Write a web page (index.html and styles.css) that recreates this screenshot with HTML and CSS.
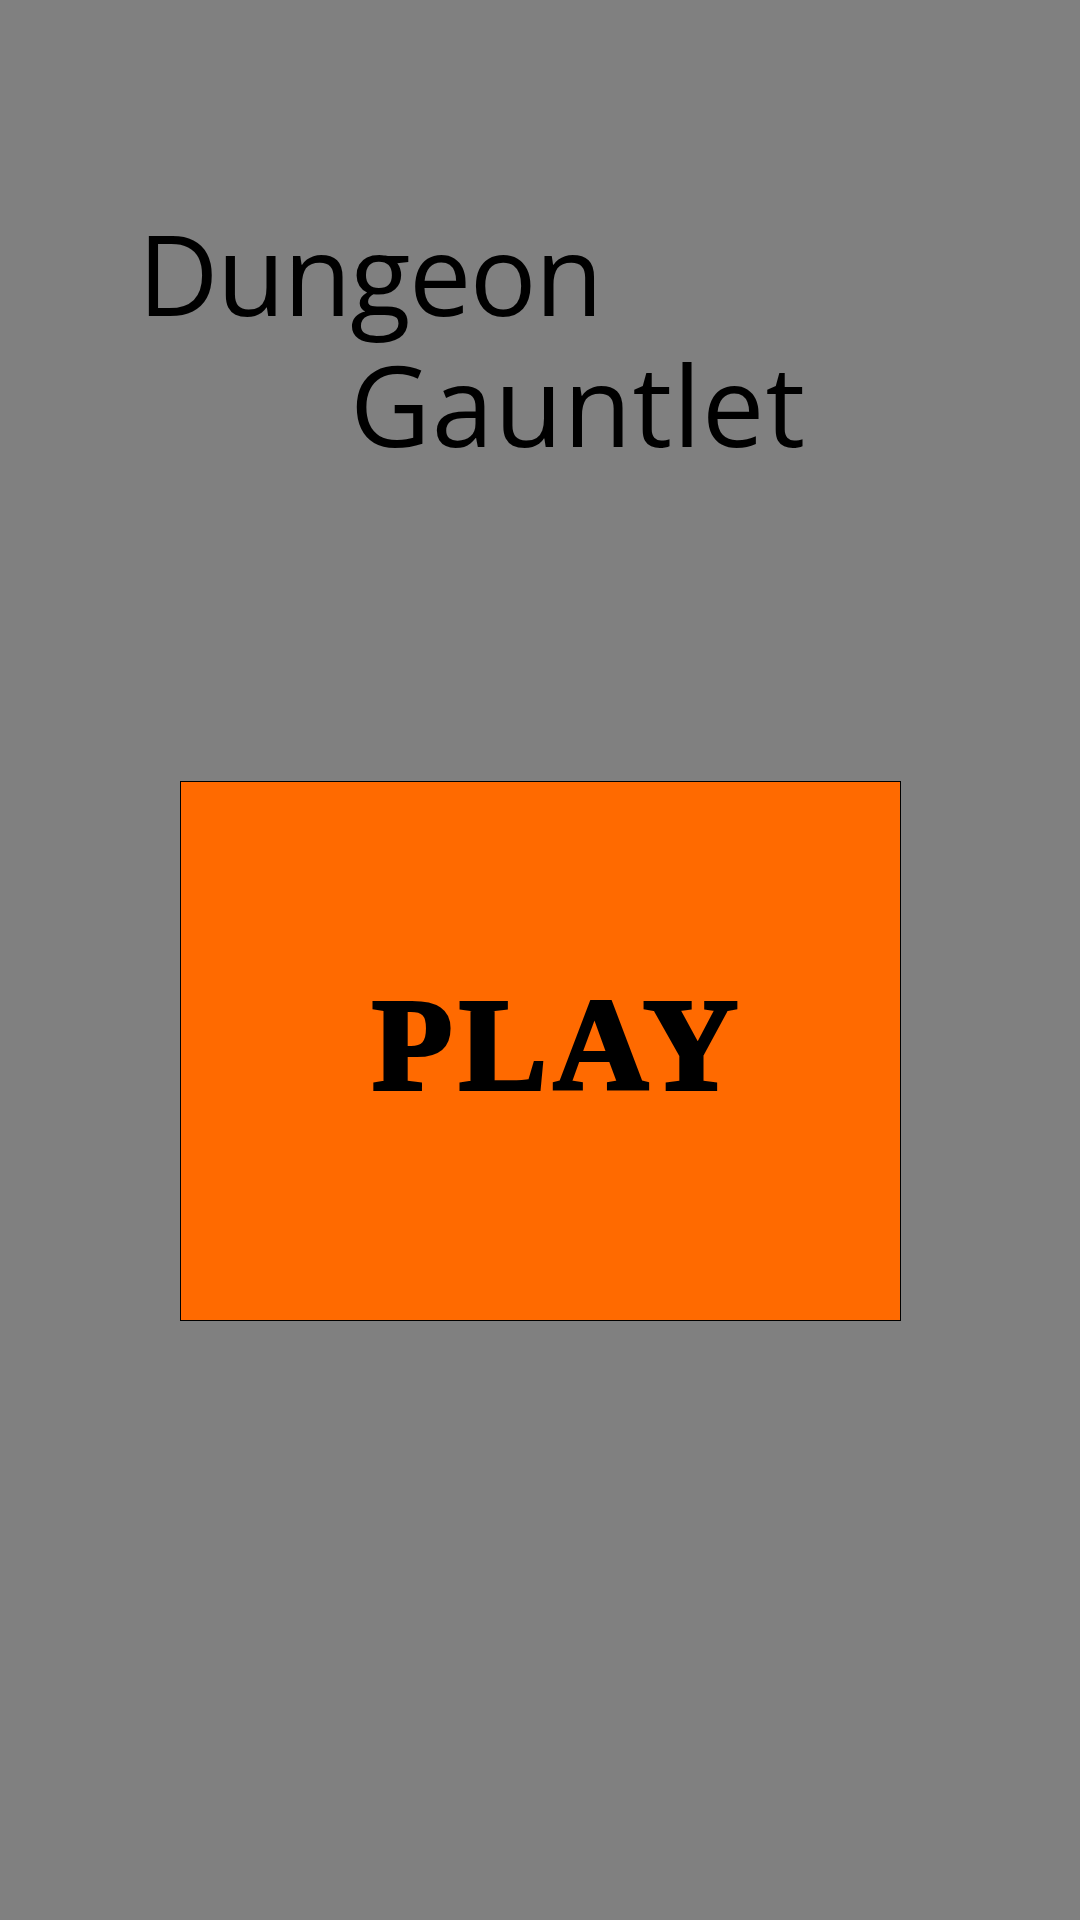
FILE: index.html
```html
<!DOCTYPE html>
<html>
<head>
<meta charset="utf-8">
<link rel="stylesheet" href="styles.css">
</head>
<body>
<div class="screen">
  <h1 class="title">
    <span class="line line-1">Dungeon</span>
    <span class="line line-2">Gauntlet</span>
  </h1>
  <button class="play">PLAY</button>
</div>
</body>
</html>
```
FILE: styles.css
```css
html, body {
  margin: 0;
  padding: 0;
  background: #808080;
}
.screen {
  width: 1080px;
  height: 1920px;
  background: #808080;
  display: flex;
  flex-direction: column;
}
.title {
  margin: 0;
  padding-top: 208px;
  font-family: "Open Sans", sans-serif;
  font-weight: 400;
  font-size: 111px;
  letter-spacing: -1.5px;
  color: #000;
}
.line {
  display: block;
  line-height: 131px;
}
.line-1 {
  padding-left: 138px;
}
.line-2 {
  padding-left: 350px;
  letter-spacing: 1px;
}
.play {
  margin: 0 0 0 180px;
  margin-top: 311px;
  width: 721px;
  height: 540px;
  box-sizing: border-box;
  border: 1px solid #000;
  background: #ff6a00;
  padding: 0 0 14px 36px;
  display: flex;
  align-items: center;
  justify-content: center;
  font-family: "Liberation Serif", serif;
  font-weight: 700;
  font-size: 131px;
  letter-spacing: 7px;
  -webkit-text-stroke: 4px #000;
  color: #000;
  cursor: pointer;
}
```
